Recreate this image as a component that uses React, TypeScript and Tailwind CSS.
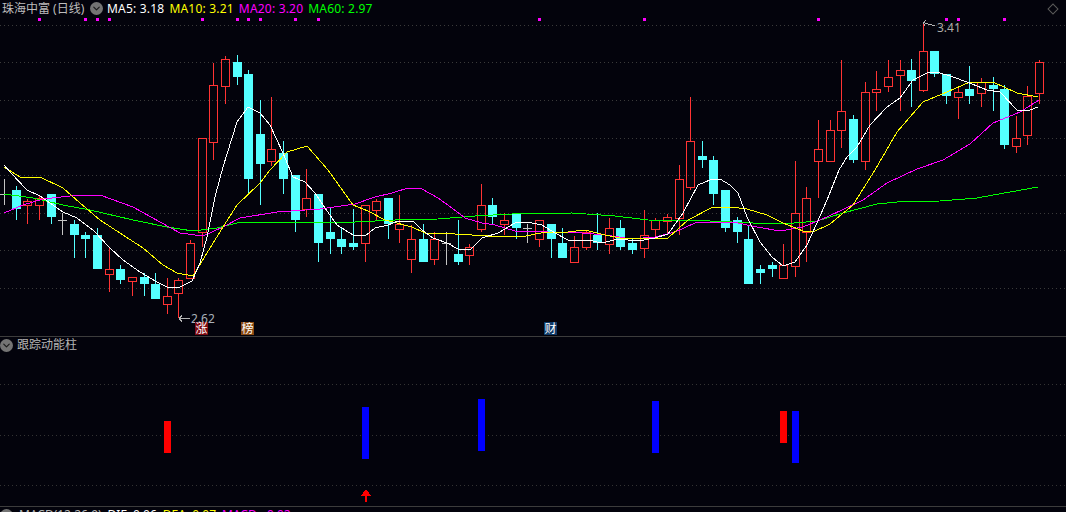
import { ChevronDown } from "lucide-react";

type Candle = [number, number, number, number, number]; // kind (0 red, 1 cyan, 2 doji), high, top, bottom, low

const candles: Candle[] = [
  [2, 179, 194, 194, 205], [1, 186, 190, 209, 220], [0, 199, 201, 205, 224], [0, 195, 198, 205, 220], [1, 194, 194, 217, 224],
  [2, 213, 220, 220, 235], [1, 220, 224, 235, 258], [1, 232, 235, 239, 258], [1, 228, 235, 269, 269], [0, 247, 269, 274, 292],
  [1, 265, 269, 280, 284], [0, 277, 277, 281, 296], [1, 273, 277, 284, 296], [1, 273, 284, 299, 299], [0, 278, 296, 304, 314],
  [0, 278, 280, 293, 318], [0, 240, 243, 278, 278], [0, 138, 138, 232, 247], [0, 63, 85, 142, 160], [0, 56, 59, 86, 104],
  [1, 55, 62, 77, 85], [1, 70, 74, 179, 194], [1, 100, 134, 164, 205], [0, 97, 149, 161, 166], [1, 141, 153, 179, 194],
  [1, 175, 175, 220, 232], [0, 169, 198, 209, 217], [1, 194, 194, 243, 262], [1, 208, 232, 239, 254], [1, 228, 239, 247, 254],
  [1, 209, 243, 247, 250], [0, 205, 205, 243, 262], [0, 199, 201, 210, 220], [1, 198, 198, 224, 239], [0, 195, 224, 229, 243],
  [0, 225, 239, 259, 273], [1, 224, 239, 262, 262], [0, 232, 239, 259, 265], [2, 232, 243, 243, 265], [1, 220, 254, 262, 265],
  [0, 244, 247, 255, 265], [0, 184, 205, 229, 232], [1, 198, 205, 217, 224], [0, 213, 220, 224, 235], [1, 213, 213, 228, 239],
  [2, 224, 228, 228, 243], [0, 220, 220, 239, 247], [1, 224, 224, 239, 258], [1, 228, 243, 258, 258], [0, 236, 247, 262, 262],
  [0, 230, 232, 247, 250], [1, 213, 235, 243, 250], [0, 218, 228, 244, 254], [1, 220, 228, 247, 250], [1, 239, 243, 250, 254],
  [0, 210, 235, 248, 258], [0, 218, 220, 229, 239], [0, 214, 217, 221, 235], [0, 165, 179, 218, 235], [0, 97, 141, 187, 190],
  [1, 141, 156, 160, 168], [1, 156, 160, 194, 205], [1, 190, 190, 228, 232], [1, 217, 220, 232, 243], [1, 225, 239, 284, 284],
  [1, 265, 269, 273, 284], [1, 262, 265, 269, 277], [0, 244, 265, 278, 278], [0, 161, 213, 266, 277], [0, 187, 198, 232, 262],
  [0, 120, 149, 161, 198], [0, 120, 130, 161, 161], [0, 60, 111, 130, 148], [1, 115, 119, 160, 163], [0, 82, 92, 161, 170],
  [0, 71, 89, 92, 111], [0, 60, 77, 86, 92], [0, 60, 70, 75, 111], [1, 59, 70, 81, 107], [0, 23, 51, 90, 92],
  [1, 51, 51, 74, 77], [1, 74, 74, 96, 104], [0, 86, 92, 97, 119], [1, 66, 89, 96, 104], [0, 78, 82, 93, 107],
  [1, 77, 85, 89, 111], [1, 85, 89, 145, 149], [0, 116, 138, 146, 153], [0, 86, 96, 135, 145], [0, 60, 62, 93, 104],
];

const ma5 = "4,165 10,172 27,190 40,196 50,203 63,212 77,218 93,230 110,248 123,260 140,272 157,282 167,287 180,287 192,281 200,263 207,237 215,197 223,167 237,122 248,107 260,113 270,125 283,153 293,177 305,182 315,193 325,208 337,225 353,235 365,236 375,228 388,225 398,221 413,221 422,230 433,238 447,243 458,249 470,250 482,238 498,233 515,223 527,222 542,225 555,233 568,240 588,240 602,243 618,239 638,241 655,238 668,234 683,213 698,185 710,180 720,179 730,185 738,193 747,217 760,242 772,257 783,266 795,262 807,245 817,223 827,200 839,170 847,157 857,147 870,125 887,107 900,98 913,80 927,73 937,72 953,77 967,82 987,90 1000,92 1017,110 1030,110 1038,107";
const ma10 = "4,167 20,177 40,177 63,188 80,203 100,220 123,235 143,248 163,265 177,273 193,276 207,253 223,227 237,205 260,183 270,170 287,152 307,146 328,170 353,205 368,211 385,220 412,227 425,233 455,234 488,236 522,237 535,234 548,232 568,232 585,230 605,235 625,239 668,238 688,220 713,207 730,207 747,209 767,215 783,223 803,231 813,232 830,224 853,205 875,170 897,132 923,102 947,92 970,82 993,82 1017,93 1038,97";
const ma20 = "4,213 23,205 43,199 70,196 100,195 133,207 160,222 180,233 203,236 223,227 240,218 277,212 320,209 355,204 375,197 392,193 408,188 422,189 438,198 452,208 465,218 482,223 495,225 515,231 548,232 582,233 605,235 632,239 655,237 675,232 695,223 710,222 733,222 757,227 780,231 803,227 827,217 863,200 887,183 917,169 943,160 970,144 993,123 1020,112 1039,100";
const ma60 = "4,194 33,198 63,205 90,210 133,220 167,227 193,231 217,228 237,223 253,222 355,222 395,220 438,219 475,216 512,214 572,213 615,216 648,220 710,221 753,223 783,224 817,221 843,213 877,204 897,202 940,201 977,198 1010,192 1038,187";

const dots = [38, 84, 96, 108, 201, 236, 247, 259, 294, 317, 538, 643, 817, 945, 957, 1003];
const mainGrid = [25, 62, 100, 138, 175, 213, 250, 288];
const subGrid = [384, 435, 485];
const bars = [
  { x: 164, y: 421, h: 32, c: "#ff0000" },
  { x: 362, y: 407, h: 52, c: "#0000ff" },
  { x: 478, y: 399, h: 52, c: "#0000ff" },
  { x: 652, y: 401, h: 52, c: "#0000ff" },
  { x: 780, y: 411, h: 32, c: "#ff0000" },
  { x: 792, y: 411, h: 52, c: "#0000ff" },
];

const CANDLE_RED = "#ff3333";
const CANDLE_CYAN = "#54ffff";

const CollapseDot = () => (
  <span className="flex h-[13px] w-[13px] shrink-0 items-center justify-center rounded-full bg-[#747474] text-[#1a1a1a]">
    <ChevronDown size={11} strokeWidth={2.5} />
  </span>
);

const CandleMark = ({ c, i }: { c: Candle; i: number }) => {
  const x = Math.round(4 + i * 11.63);
  const [kind, high, top, bottom, low] = c;
  if (kind === 2) {
    return (
      <g stroke="#c4c4c4">
        <line x1={x + 0.5} y1={high} x2={x + 0.5} y2={low} />
        <line x1={x - 4} y1={top + 0.5} x2={x + 5} y2={top + 0.5} />
      </g>
    );
  }
  if (kind === 1) {
    return (
      <g>
        <rect x={x} y={high} width={1} height={low - high} fill={CANDLE_CYAN} />
        <rect x={x - 4} y={top} width={9} height={bottom - top} fill={CANDLE_CYAN} />
      </g>
    );
  }
  return (
    <g>
      <rect x={x} y={high} width={1} height={Math.max(top - high, 0)} fill={CANDLE_RED} />
      <rect x={x} y={bottom} width={1} height={Math.max(low - bottom, 0)} fill={CANDLE_RED} />
      <rect x={x - 3.5} y={top + 0.5} width={8} height={bottom - top} fill="none" stroke={CANDLE_RED} />
    </g>
  );
};

const Badge = ({ text, left, bg }: { text: string; left: string; bg: string }) => (
  <span className={`absolute top-[306px] flex h-[13px] w-[13px] items-center justify-center text-[12px] leading-none text-white ${left} ${bg}`}>
    {text}
  </span>
);

export default function App() {
  return (
    <div className="flex h-[512px] w-[1066px] flex-col overflow-hidden bg-[#03030c] font-['Noto_Sans','Noto_Sans_CJK_SC',sans-serif] text-[12px]">
      <div className="h-[337px] shrink-0 border-b border-[#3c3c3c]">
        <div className="flex h-4 items-center pl-0.5 pt-px leading-none">
          <span className="w-[88px] shrink-0 text-[#bdbdbd]">珠海中富 (日线)</span>
          <CollapseDot />
          <div className="ml-1 flex gap-[5px] tracking-[0.2px]">
            <span className="text-white">MA5: 3.18</span>
            <span className="text-[#ffff00]">MA10: 3.21</span>
            <span className="text-[#ff00ff]">MA20: 3.20</span>
            <span className="text-[#00ff00]">MA60: 2.97</span>
          </div>
          <span className="ml-auto mr-[9px] h-2 w-2 rotate-45 border border-[#5a5a5a]" />
        </div>
        <div className="relative h-[320px]">
          <svg viewBox="0 16 1066 320" width={1066} height={320} className="block" shapeRendering="crispEdges">
            {mainGrid.map((y) => (
              <line key={y} x1={0} y1={y + 0.5} x2={1066} y2={y + 0.5} stroke="#3a3a3a" strokeDasharray="1 3" />
            ))}
            {dots.map((x) => (
              <rect key={x} x={x} y={18} width={3} height={3} fill="#ff00ff" />
            ))}
            {candles.map((c, i) => (
              <CandleMark key={i} c={c} i={i} />
            ))}
            <polyline points={ma60} fill="none" stroke="#00ff00" />
            <polyline points={ma20} fill="none" stroke="#ff00ff" />
            <polyline points={ma10} fill="none" stroke="#ffff00" />
            <polyline points={ma5} fill="none" stroke="#ffffff" />
            <g fill="none" stroke="#b4b4b4">
              <path d="M179 318.5H190M179 318.5l3-3M179 318.5l3 3" />
              <path d="M923 22.5l12 3.5M923 22.5l3-2M923 22.5l2 3" />
            </g>
          </svg>
          <span className="absolute left-[191px] top-[296px] leading-[14px] text-[#a9b1ba]">2.62</span>
          <span className="absolute left-[937px] top-[5px] leading-[14px] text-[#b0aca6]">3.41</span>
          <Badge text="涨" left="left-[195px]" bg="bg-[#7c0a12]" />
          <Badge text="榜" left="left-[241px]" bg="bg-[#8a4a12]" />
          <Badge text="财" left="left-[544px]" bg="bg-[#0e3a68]" />
        </div>
      </div>

      <div className="h-[170px] shrink-0 border-b border-[#3c3c3c]">
        <div className="flex h-[14px] items-center gap-[4px] pt-[2px] leading-none text-[#b4b4b4]">
          <CollapseDot />
          <span>跟踪动能柱</span>
        </div>
        <svg viewBox="0 351 1066 155" width={1066} height={155} className="block" shapeRendering="crispEdges">
          {subGrid.map((y) => (
            <line key={y} x1={0} y1={y + 0.5} x2={1066} y2={y + 0.5} stroke="#333333" strokeDasharray="1 3" />
          ))}
          {bars.map((b) => (
            <rect key={b.x} x={b.x} y={b.y} width={7} height={b.h} fill={b.c} />
          ))}
          <path d="M366 489.5L360.5 496H365V502H367V496H371.5Z" fill="#ff0000" />
        </svg>
      </div>

      <div className="flex h-4 shrink-0 items-center gap-[6px] leading-none">
        <CollapseDot />
        <span className="text-[#b4b4b4]">MACD(12,26,9)</span>
        <span className="text-white">DIF: 0.06</span>
        <span className="text-[#ffff00]">DEA: 0.07</span>
        <span className="text-[#ff00ff]">MACD: -0.02</span>
      </div>
    </div>
  );
}
